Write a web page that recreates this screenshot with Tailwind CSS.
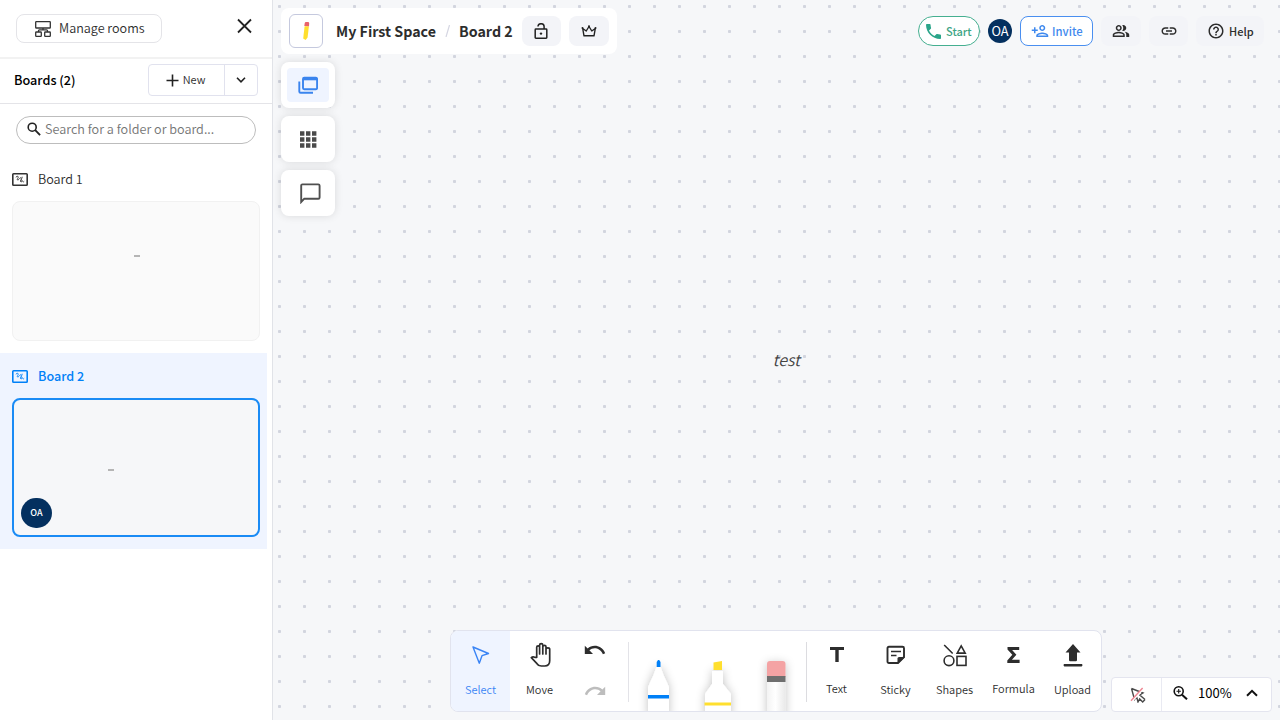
<!DOCTYPE html>
<html lang="en">
<head>
<meta charset="utf-8">
<title>My First Space - Board 2</title>
<script src="https://cdn.jsdelivr.net/npm/@tailwindcss/browser@4"></script>
</head>
<body class="flex h-screen w-screen overflow-hidden bg-[#f6f7f9] font-['Noto_Sans_CJK_SC','Noto_Sans',sans-serif] font-[350] text-[#2d2d2d]">

<!-- Sidebar -->
<aside class="flex h-full w-[273px] shrink-0 flex-col border-r border-[#e1e3e8] bg-white">
  <div class="flex h-[59px] shrink-0 items-start justify-between border-b-2 border-[#f2f2f2] pt-[14px] pr-[18px] pl-4">
    <button class="flex h-[29px] w-[146px] items-center gap-2 rounded-lg border border-[#e4e4e8] pl-[18px] text-[12.6px] leading-[18px] whitespace-nowrap">
      <svg class="h-4 w-4 shrink-0" viewBox="0 0 16 16" fill="none" stroke="#333" stroke-width="1.3"><rect x=".7" y=".7" width="14.6" height="6.3" rx=".6"/><path d="M8 7v1.5M3.500 11V9.800Q3.500 8.800 4.500 8.800H11.500Q12.500 8.800 12.500 9.800V11"/><rect x=".7" y="11" width="5.600" height="4.300" rx=".6"/><rect x="9.700" y="11" width="5.600" height="4.300" rx=".6"/></svg>
      <span class="pb-0.5">Manage rooms</span>
    </button>
    <svg class="mt-[2px] h-5 w-5" viewBox="0 0 20 20" fill="none" stroke="#222" stroke-width="1.800"><path d="M4 3.500l13 13M17 3.500l-13 13"/></svg>
  </div>
  <div class="flex h-[45px] shrink-0 items-center justify-between border-b border-[#e4e4e8] pr-[14px] pb-[2px] pl-[14px]">
    <h2 class="text-[12.7px] leading-[18px] font-medium text-black">Boards (2)</h2>
    <div class="flex h-8 w-[110px] rounded border border-[#e1e2ee]">
      <div class="flex w-[76px] items-center justify-center gap-1 border-r border-[#e1e2ee] pr-[2px] text-[11px]">
        <svg class="h-[13px] w-[13px]" viewBox="0 0 13 13" stroke="#222" stroke-width="1.600"><path d="M6.500 .5v12M.5 6.500h12"/></svg>
        <span class="pb-0.5 leading-4">New</span>
      </div>
      <div class="flex flex-1 items-center justify-center"><svg class="h-[6px] w-[10px]" viewBox="0 0 10 6" fill="none" stroke="#222" stroke-width="1.600"><path d="M1 .8l4 4 4-4"/></svg></div>
    </div>
  </div>
  <div class="mx-4 mt-3 flex h-7 shrink-0 items-center gap-1 rounded-full border border-[#bdbdbd] pl-[10px] text-[12.65px] text-[#757575]">
    <svg class="mb-0.5 h-[14px] w-[14px]" viewBox="0 0 14 14" fill="none" stroke="#222"><circle cx="5.200" cy="5.200" r="4" stroke-width="1.600"/><path d="M8.200 8.200l4.900 4.900" stroke-width="1.900"/></svg>
    <span class="pb-0.5 leading-[18px]">Search for a folder or board...</span>
  </div>
  <section class="mt-[12px] mr-[5px] flex h-[197px] shrink-0 flex-col px-3 pt-[14px]">
    <div class="flex h-[18px] items-center gap-[10px] text-[12.6px]">
      <svg class="h-[13px] w-4" viewBox="0 0 16 13" fill="none" stroke="#333"><rect x=".8" y=".8" width="14.400" height="11.400" rx=".8" stroke-width="1.600"/><path d="M3.800 4.300q1.500-1.900 2.400-.6c.4 1.200-1.600 2.700-.7 3.300 1 .4 1.800-1.800 3.700-2.600M8.600 8.700c.6-1.800 1.200-3.600 1.700-4.900M9 6.500c-1 2.800.6 2.800 1.400 1.200.3 1.400 1.200 1.400 1.800.6" stroke-width=".9"/></svg>
      <span class="leading-[18px]">Board 1</span>
    </div>
    <div class="mt-[13px] h-[140px] w-[248px] rounded-lg border border-[#f1f1f1] bg-[#fafafa] pt-[53px] pl-[121px]"><div class="h-[2px] w-[6px] bg-[#b5b5b5]"></div></div>
  </section>
  <section class="mr-[5px] flex h-[196px] shrink-0 flex-col bg-[#eff4ff] px-3 pt-[14px]">
    <div class="flex h-[18px] items-center gap-[10px] text-[12.600px] font-medium text-[#0080f7]">
      <svg class="h-[13px] w-4" viewBox="0 0 16 13" fill="none" stroke="currentColor"><rect x=".8" y=".8" width="14.400" height="11.400" rx=".8" stroke-width="1.600"/><path d="M3.800 4.300q1.500-1.900 2.400-.6c.4 1.200-1.600 2.700-.7 3.300 1 .4 1.800-1.800 3.700-2.600M8.600 8.700c.6-1.800 1.200-3.600 1.700-4.900M9 6.500c-1 2.800.6 2.800 1.400 1.200.3 1.400 1.200 1.400 1.800.6" stroke-width=".9"/></svg>
      <span class="leading-[18px]">Board 2</span>
    </div>
    <div class="mt-[13px] flex h-[139px] w-[248px] flex-col rounded-lg border-2 border-[#1a8bf5] bg-[#f6f7f9]">
      <div class="mt-[69px] ml-[94px] h-[2px] w-[6px] bg-[#b5b5b5]"></div>
      <div class="mt-[27px] ml-[7px] flex h-[30px] w-[31px] items-center justify-center rounded-full bg-[#04305f] text-[9px] leading-[12px] font-medium text-white">OA</div>
    </div>
  </section>
</aside>

<!-- Canvas -->
<main class="relative flex h-full flex-1 flex-col bg-[radial-gradient(circle_at_center,#d2d5de_1.300px,transparent_1.900px)] bg-[length:25px_25px] bg-[position:-6px_-6px]">
  <header class="flex h-[55px] shrink-0 items-start justify-between pt-2 pr-4 pl-2">
    <div class="flex h-[46px] w-[336px] items-center rounded-lg bg-white pl-2 text-[14.250px] font-bold whitespace-nowrap">
      <div class="flex h-[34px] w-[34px] items-center justify-center rounded-md border border-[#c5c9de]">
        <svg class="h-5 w-4" viewBox="0 0 16 20"><path d="M6.600 5.200h4.300L9.600 16.600 7.600 18.900 5.200 17.400z" fill="#ffdf2e"/><path d="M6.700 2.200q.1-1.300 1.400-1.300h1.800q1.400 0 1.300 1.400L11 5.300 6.300 5z" fill="#e9626b"/></svg>
      </div>
      <span class="ml-[13px] w-[101px] leading-5">My First Space</span>
      <svg class="ml-[8px] h-3 w-[6px]" viewBox="0 0 6 12" stroke="#d5d6e2" stroke-width="1.200"><path d="M1 12L4.500 0"/></svg>
      <span class="ml-[8px] w-[54px] leading-5">Board 2</span>
      <div class="ml-[9px] flex h-[30px] w-[39px] items-center justify-center rounded-lg bg-[#f3f4f8] pr-px">
        <svg class="h-4 w-[14px]" viewBox="0 0 14 16" fill="none" stroke="#222" stroke-width="1.500"><rect x="1.200" y="6" width="11.600" height="9.200" rx=".7"/><path d="M4 3.300V3.500C4.200-.2 10-.2 10.100 3.500V6"/><circle cx="7" cy="10.600" r="1.200" fill="#222" stroke="none"/></svg>
      </div>
      <div class="ml-2 flex h-[30px] w-10 items-center justify-center rounded-lg bg-[#f3f4f8]">
        <svg class="h-3 w-4" viewBox="0 0 16 12" fill="none" stroke="#222" stroke-width="1.400" stroke-linejoin="round"><path d="M3 10.800L1.700 3.500 5.200 6 8 1.500 10.800 6 14.300 3.500 13 10.800z"/><g fill="#222" stroke="none"><circle cx="1.500" cy="3" r="1"/><circle cx="8" cy="1.300" r="1"/><circle cx="14.500" cy="3" r="1"/></g></svg>
      </div>
    </div>
    <div class="flex items-center gap-2 pt-2 text-[11px] font-medium">
      <div class="flex h-[30px] w-[62.500px] items-center gap-[5px] rounded-full border border-[#45af90] bg-white pl-[7.500px] text-[#3fa586]">
        <svg class="h-[15px] w-[15px]" viewBox="3 3 18 18" fill="#2ba58a"><path d="M6.620 10.790c1.440 2.830 3.760 5.140 6.590 6.590l2.200-2.200c.27-.27.67-.36 1.020-.24 1.120.37 2.330.57 3.570.57.550 0 1 .45 1 1V20c0 .55-.45 1-1 1-9.390 0-17-7.610-17-17 0-.55.45-1 1-1h3.500c.55 0 1 .45 1 1 0 1.250.2 2.450.57 3.570.110.350.030.740-.25 1.020l-2.200 2.200z"/></svg>
        <span class="pb-px leading-4">Start</span>
      </div>
      <div class="flex h-6 w-6 items-center justify-center rounded-full bg-[#04305f] text-[12.800px] leading-4 font-normal text-white">OA</div>
      <div class="flex h-[30px] w-[73px] items-center gap-[3px] rounded-lg border border-[#4a8ff0] bg-white pl-[10px] text-[#3f89ee]">
        <svg class="h-[18px] w-[18px]" viewBox="0 0 24 24" fill="currentColor"><path d="M15 12c2.210 0 4-1.790 4-4s-1.790-4-4-4-4 1.790-4 4 1.790 4 4 4zm0-6c1.100 0 2 .9 2 2s-.9 2-2 2-2-.9-2-2 .9-2 2-2zm0 8c-2.670 0-8 1.340-8 4v2h16v-2c0-2.660-5.330-4-8-4zm-6 4c.220-.720 3.310-2 6-2 2.700 0 5.800 1.290 6 2H9zm-3-3v-3h3v-2H6V7H4v3H1v2h3v3z"/></svg>
        <span class="pb-px text-[11.300px] leading-4">Invite</span>
      </div>
      <div class="flex h-[30px] w-10 items-center justify-center rounded-lg bg-[#f3f4f8]">
        <svg class="h-[18px] w-[18px]" viewBox="0 0 24 24" fill="#2d2d2d"><path d="M16.670 13.130C18.040 14.060 19 15.320 19 17v3h4v-3c0-2.180-3.570-3.470-6.330-3.870zM15 12c2.210 0 4-1.790 4-4s-1.790-4-4-4c-.47 0-.91.1-1.330.24C14.500 5.270 15 6.580 15 8s-.5 2.730-1.330 3.760c.42.140.86.240 1.330.240zM9 12c2.210 0 4-1.790 4-4s-1.790-4-4-4-4 1.790-4 4 1.790 4 4 4zm0-6c1.100 0 2 .9 2 2s-.9 2-2 2-2-.9-2-2 .9-2 2-2zm0 7c-2.670 0-8 1.340-8 4v3h16v-3c0-2.660-5.330-4-8-4zm6 5H3v-.99C3.200 16.290 6.300 15 9 15s5.800 1.290 6 2v1z"/></svg>
      </div>
      <div class="flex h-[30px] w-[39px] items-center justify-center rounded-lg bg-[#f3f4f8]">
        <svg class="h-[18px] w-[18px]" viewBox="0 0 24 24" fill="#2d2d2d"><path d="M3.900 12c0-1.710 1.390-3.100 3.100-3.100h4V7H7c-2.760 0-5 2.240-5 5s2.240 5 5 5h4v-1.900H7c-1.710 0-3.100-1.390-3.100-3.100zM8 13h8v-2H8v2zm9-6h-4v1.900h4c1.710 0 3.100 1.390 3.100 3.100s-1.390 3.100-3.100 3.100h-4V17h4c2.760 0 5-2.240 5-5s-2.240-5-5-5z"/></svg>
      </div>
      <div class="flex h-[30px] w-[68px] items-center gap-1 rounded-lg bg-[#f3f4f8] pl-[11px]">
        <svg class="h-[18px] w-[18px]" viewBox="0 0 24 24" fill="#2d2d2d"><path d="M11 18h2v-2h-2v2zm1-16C6.480 2 2 6.480 2 12s4.480 10 10 10 10-4.480 10-10S17.520 2 12 2zm0 18c-4.410 0-8-3.590-8-8s3.590-8 8-8 8 3.590 8 8-3.590 8-8 8zm0-14c-2.210 0-4 1.790-4 4h2c0-1.100.9-2 2-2s2 .9 2 2c0 2-3 1.750-3 5h2c0-2.250 3-2.500 3-5 0-2.210-1.790-4-4-4z"/></svg>
        <span class="pb-px leading-4">Help</span>
      </div>
    </div>
  </header>

  <nav class="mt-[7px] ml-2 flex w-[54px] flex-col gap-2">
    <div class="flex h-[46px] rounded-lg bg-white p-[6px] shadow-[0_0_8px_rgba(0,0,0,0.12)]">
      <div class="flex flex-1 items-center justify-center rounded bg-[#eff4ff]">
        <svg class="h-5 w-5" viewBox="0 0 20 20" fill="none" stroke="#3a84ee" stroke-width="1.900"><rect x="5" y="2.800" width="14.100" height="11.400" rx="1.200"/><path d="M5 4h14" stroke-width="2.600"/><path d="M1.300 6.500v9.900q0 1.300 1.300 1.300H15"/></svg>
      </div>
    </div>
    <div class="flex h-[46px] items-center justify-center rounded-lg bg-white shadow-[0_0_8px_rgba(0,0,0,0.12)]">
      <svg class="h-[17px] w-[17px]" viewBox="0 0 17 17" fill="#4a4a4a"><path d="M0 .3h4.400v4.400H0zM6 .3h4.400v4.400H6zM12 .3h4.400v4.400H12zM0 6.300h4.400v4.400H0zM6 6.300h4.400v4.400H6zM12 6.300h4.400v4.400H12zM0 12.300h4.400v4.400H0zM6 12.300h4.400v4.400H6zM12 12.300h4.400v4.400H12z"/></svg>
    </div>
    <div class="flex h-[46px] items-center justify-center rounded-lg bg-white pl-[4px] shadow-[0_0_8px_rgba(0,0,0,0.12)]">
      <svg class="h-[21px] w-[21px]" viewBox="0 0 21 21" fill="none" stroke="#505050" stroke-width="1.900"><path d="M1.200 19V2.600Q1.200 1.400 2.400 1.400H18.300Q19.600 1.400 19.600 2.700V14.400Q19.600 15.700 18.300 15.700H4.300z"/></svg>
    </div>
  </nav>

  <p class="absolute top-[347px] left-[499.500px] text-[16px] leading-6 text-[#444] italic">test</p>

  <footer class="mt-auto flex items-end pr-2 pl-[177px]">
    <div class="mb-2 flex h-[82px] w-[652px] shrink-0 overflow-hidden rounded-lg border border-[#e1e3ee] bg-white text-[11px] leading-4 *:shrink-0">
      <div class="flex w-[59px] flex-col items-center bg-[#eff4ff] pt-[14px] text-[#3a84f5]">
        <svg class="ml-px h-5 w-5" viewBox="0 0 20 20" fill="none" stroke="currentColor" stroke-width="1.400" stroke-linejoin="round"><path d="M2 2L17.500 8.500 11 10.700 8.300 18.200z"/></svg>
        <span class="mt-[16px]">Select</span>
      </div>
      <div class="flex w-[59px] flex-col items-center pt-[11px]">
        <svg class="ml-[2px] h-[26px] w-[22px]" viewBox="0 0 22 26" fill="none" stroke="#2d2d2d" stroke-width="1.700" stroke-linecap="round" stroke-linejoin="round"><path d="M6.700 15.500V5.300c0-1.900 2.900-1.900 2.900 0V3.200c0-2 3.200-2 3.200 0v1.500c0-1.900 3.200-1.900 3.200 0v2.500c0-1.900 3.700-1.900 3.700 0v11.600c0 3.200-2 5.200-5 5.200h-3.500c-2 0-3.200-.7-4.200-2.300L1.300 15.700c1.200-1.200 2.500-1.100 3.600-.3zM9.600 5v7M12.800 4v8M16 5v7"/></svg>
        <span class="mt-[13px]">Move</span>
      </div>
      <div class="flex w-[50px] flex-col items-center pt-[14px] pl-px">
        <svg class="h-[10px] w-[22px]" viewBox="0 0 22 10"><path d="M.8.700L3.700 3.600C7.800-.6 17.500-.7 21.200 8.300L18.900 9.200C15.900 2.500 9 1.700 5.400 5.300L9 8.900H.8z" fill="#2d2d2d"/></svg>
        <svg class="mt-[31px] h-[10px] w-[22px]" viewBox="0 0 22 10"><path d="M21.200.700L18.300 3.600C14.200-.6 4.500-.7.8 8.300L3.100 9.200C6.100 2.500 13 1.700 16.600 5.300L13 8.900H21.200z" fill="#bdbdbd"/></svg>
      </div>
      <div class="mt-[11px] ml-[9px] h-[60px] w-px bg-[#e3e3e8]"></div>
      <svg class="mt-[18px] h-[62px] w-[177px]" viewBox="628 649 177 62">
        <defs><filter id="soft" x="-60%" y="-40%" width="220%" height="180%"><feDropShadow dx="0" dy="0" stdDeviation="5" flood-color="#000" flood-opacity=".24"/></filter>
        <linearGradient id="tube"><stop offset="0" stop-color="#f3f3f3"/><stop offset=".45" stop-color="#fff"/><stop offset="1" stop-color="#e9e9e9"/></linearGradient></defs>
        <path filter="url(#soft)" fill="#fff" d="M655.500 667h4l3 8 5.500 12v30h-21V687l5.500-12z"/>
        <path d="M655.700 667v-5l1.300-2h1.200l1.300 2v5z" fill="#0080f7"/><path d="M647 695h21v3.500h-21z" fill="#0080f7"/>
        <path filter="url(#soft)" fill="#fff" d="M711 671h11v13l8 10v24h-26v-24l7-10z"/>
        <path d="M712.500 670v-7.500l8.500-1.500v9z" fill="#ffdf2e"/><path d="M703.500 702.500h26.500v3h-26.500z" fill="#ffdf2e"/>
        <path filter="url(#soft)" fill="url(#tube)" d="M766 663h18.500v55H766z"/>
        <path d="M766 677v-13q0-3 3-3h12.500q3 0 3 3v13z" fill="#f4a3a4"/><path d="M766 676h18.500v6H766z" fill="#6f6f6f"/>
      </svg>
      <div class="mt-[11px] h-[60px] w-px bg-[#dcdce0]"></div>
      <div class="flex">
        <div class="flex w-[59px] flex-col items-center pt-[16px]">
          <svg class="h-[15px] w-[14px]" viewBox="0 0 14 15" fill="#2d2d2d"><path d="M0 0h14v3H8.700v12H5.300V3H0z"/></svg>
          <span class="mt-[18px]">Text</span>
        </div>
        <div class="flex w-[59px] flex-col items-center pt-[14px]">
          <svg class="h-5 w-5" viewBox="0 0 20 20"><path d="M3 1.800h13.500q1.500 0 1.500 1.500V12l-6 6H3q-1.500 0-1.500-1.500V3.300Q1.500 1.800 3 1.800z" fill="none" stroke="#2d2d2d" stroke-width="1.900"/><path d="M11.500 19v-5.500q0-1.500 1.500-1.500h6z" fill="#2d2d2d"/><path d="M5 6.500h10M5 10.500h5.500" stroke="#2d2d2d" stroke-width="1.700"/></svg>
          <span class="mt-[16px]">Sticky</span>
        </div>
        <div class="flex w-[59px] flex-col items-center pt-[13px]">
          <svg class="h-[23px] w-[24px]" viewBox="0 0 24 23" fill="none" stroke="#2d2d2d" stroke-width="1.600"><path d="M1.200 1l8.500 8.500M18.200 1.800l4 7.300h-8z"/><circle cx="6" cy="16.700" r="4.900"/><rect x="14" y="12.400" width="9" height="9"/></svg>
          <span class="mt-[14px]">Shapes</span>
        </div>
        <div class="flex w-[59px] flex-col items-center pt-[16px]">
          <svg class="h-4 w-[13px]" viewBox="0 0 13 16" fill="#2d2d2d"><path d="M.5 0h11.700v3H5.100l4.300 4.700-4.500 5.100h7.700V16H.3v-2.500l5-5.700L.5 2.500z"/></svg>
          <span class="mt-[17px]">Formula</span>
        </div>
        <div class="flex w-[59px] shrink-0 flex-col items-center pt-[13px]">
          <svg class="h-[23px] w-5" viewBox="0 0 20 23" fill="#2d2d2d"><path d="M10 0l7.500 8.500H14V16q0 1.200-1.200 1.200H7.200Q6 17.200 6 16V8.500H2.500z"/><rect x=".6" y="20" width="18.800" height="2.400" rx=".8"/></svg>
          <span class="mt-[14px]">Upload</span>
        </div>
      </div>
    </div>
    <div class="mb-[8px] ml-auto flex h-[35px] w-[161px] rounded border border-[#e4e5ef] bg-white text-[13px] font-normal text-black">
      <div class="flex w-[50px] items-center justify-center border-r border-[#e9eaf2] pt-px pl-[2px]">
        <svg class="h-4 w-4" viewBox="0 0 16 16" fill="none"><path d="M1.500 1.500L13 6 9.800 8 15 12.500M1.500 1.500L4.500 12.500 6.800 9.600M15 12.500l-2.300 2.400-3-3-1.700 3-1.400-5.200" stroke="#4a4a4a" stroke-width="1.400"/><path d="M1.600 14.600L13 2" stroke="#fff" stroke-width="2"/><path d="M1 13.800L12.600 1" stroke="#ee8591" stroke-width="1.400"/></svg>
      </div>
      <div class="flex flex-1 items-center pb-[3px] pl-[10.500px]">
        <svg class="h-[14px] w-[15px]" viewBox="0 0 15 14" fill="none" stroke="#111"><circle cx="5.700" cy="5.300" r="4.500" stroke-width="1.600"/><path d="M9 8.700l5 4.600" stroke-width="2"/><path d="M3.500 5.300h4.400M5.700 3.100v4.400" stroke-width="1.100"/></svg>
        <span class="ml-[10.500px] w-[34px] leading-[18px]">100%</span>
        <svg class="ml-[13.500px] h-[8px] w-3" viewBox="0 0 12 8" fill="none" stroke="#111" stroke-width="2"><path d="M1 6.800l5-5 5 5"/></svg>
      </div>
    </div>
  </footer>
</main>
</body>
</html>
